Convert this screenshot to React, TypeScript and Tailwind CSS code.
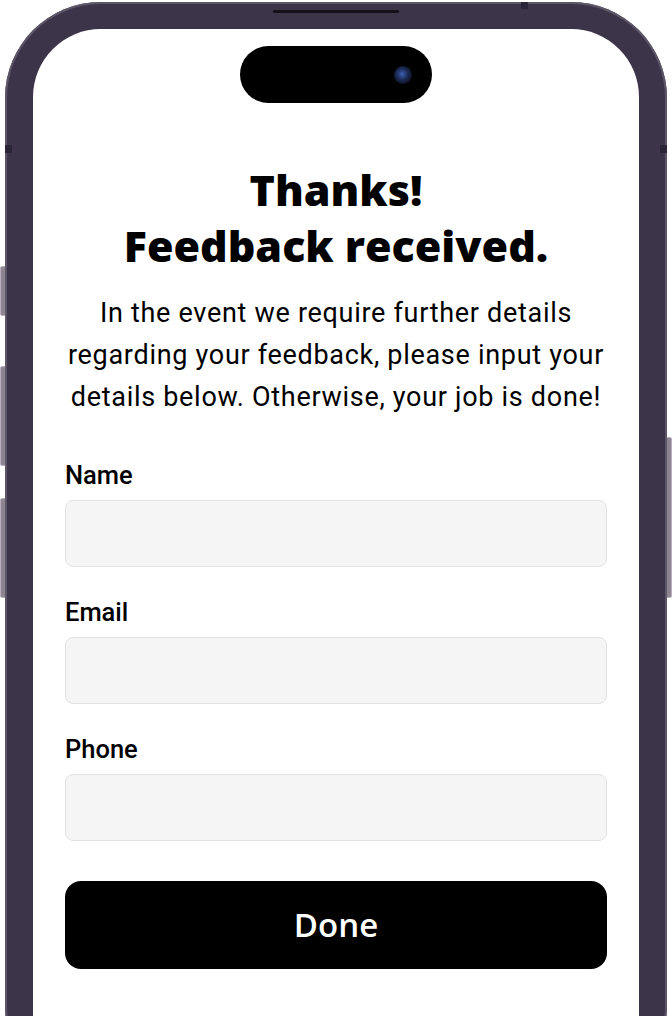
import React from "react";

const heading = { fontFamily: '"Open Sans", "DejaVu Sans", sans-serif' };
const body = { fontFamily: 'Roboto, "Liberation Sans", sans-serif' };

function Field({ label }: { label: string }) {
  return (
    <div className="flex flex-col gap-[11px]">
      <label className="text-[25.5px] leading-[28px] font-medium text-black">{label}</label>
      <input className="h-[67px] w-full rounded-[8px] border border-[#e2e2e2] bg-[#f5f5f5] px-4 text-[20px] outline-none" />
    </div>
  );
}

export default function App() {
  return (
    <div className="relative h-[1016px] w-[672px] overflow-hidden bg-white" style={body}>
      {/* side buttons */}
      <div className="absolute left-0 top-[266px] h-[50px] w-[6px] rounded-l-[2px] border border-[#b9b2bd] bg-[#8d8592]" />
      <div className="absolute left-0 top-[366px] h-[100px] w-[6px] rounded-l-[2px] border border-[#b9b2bd] bg-[#8d8592]" />
      <div className="absolute left-0 top-[498px] h-[100px] w-[6px] rounded-l-[2px] border border-[#b9b2bd] bg-[#8d8592]" />
      <div className="absolute right-0 top-[437px] h-[161px] w-[6px] rounded-r-[2px] border border-[#b9b2bd] bg-[#8d8592]" />

      <div className="relative ml-[5px] mt-[2px] h-[1100px] w-[662px] rounded-[96px] bg-[#3c3549] px-[28px] pt-[27px] shadow-[inset_0_0_0_2px_#5d5668]">
        {/* speaker slit + antenna bands */}
        <div className="absolute left-[268px] top-[8px] h-[3px] w-[126px] rounded-full bg-[#141218]" />
        <div className="absolute left-[516px] top-0 h-[7px] w-[7px] bg-[#2b2538]" />
        <div className="absolute left-0 top-[143px] h-[8px] w-[7px] bg-[#2b2538]" />
        <div className="absolute right-0 top-[143px] h-[8px] w-[7px] bg-[#2b2538]" />

        <div className="flex h-full flex-col items-center rounded-[68px] bg-white px-[32px] pt-[17px]">
          <div className="relative flex h-[57px] w-[192px] items-center justify-end rounded-full bg-black pr-[20px]">
            <div className="h-[18px] w-[18px] rounded-full bg-[radial-gradient(circle_at_45%_45%,#3c5fb0_0%,#1b2b55_40%,#0d1020_75%)]" />
          </div>

          <h1 className="mt-[59px] text-center text-[43px] font-extrabold leading-[56px] text-black" style={heading}>
            Thanks!
            <br />
            Feedback received.
          </h1>

          <p className="mt-[18px] w-[560px] text-center text-[27px] leading-[42px] tracking-[0.7px] text-black">
            In the event we require further details regarding your feedback, please input your details below. Otherwise, your job is done!
          </p>

          <form className="mt-[43px] flex w-full flex-col gap-[31px]">
            <Field label="Name" />
            <Field label="Email" />
            <Field label="Phone" />
            <button
              type="button"
              className="mt-[9px] h-[88px] w-full rounded-[16px] bg-black text-[33px] font-semibold text-white"
              style={heading}
            >
              Done
            </button>
          </form>
        </div>
      </div>
    </div>
  );
}
